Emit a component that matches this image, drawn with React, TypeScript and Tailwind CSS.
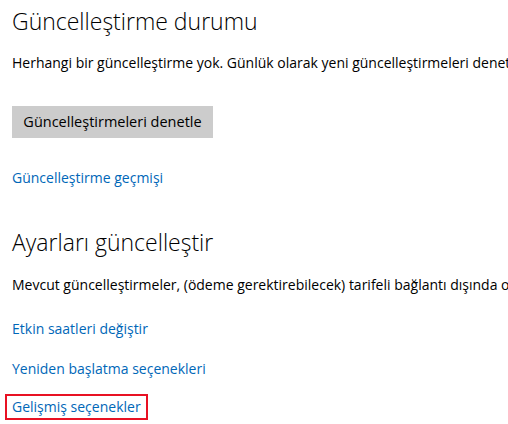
import React from "react";

export default function App() {
  const font = { fontFamily: '"Open Sans", "Noto Sans", sans-serif' };
  return (
    <div className="w-[508px] h-[424px] overflow-hidden bg-white text-black" style={font}>
      <div className="pl-[12px] flex flex-col items-start">
        <h1 className="mt-[5px] h-[32px] text-[23px] leading-[32px] font-light whitespace-nowrap">Güncelleştirme durumu</h1>
        <p className="mt-[16px] h-[20px] text-[14px] leading-[20px] whitespace-nowrap">
          Herhangi bir güncelleştirme yok. Günlük olarak yeni güncelleştirmeleri denetleyeceğiz.
        </p>
        <button className="mt-[33px] w-[201px] h-[32px] bg-[#cccccc] text-[14.5px] text-black whitespace-nowrap">
          Güncelleştirmeleri denetle
        </button>
        <a className="mt-[30px] h-[20px] text-[14px] leading-[20px] text-[#0067b8] whitespace-nowrap">Güncelleştirme geçmişi</a>
        <h1 className="mt-[38px] h-[32px] text-[23px] leading-[32px] font-light whitespace-nowrap">Ayarları güncelleştir</h1>
        <p className="mt-[17px] h-[20px] text-[14px] leading-[20px] whitespace-nowrap">
          Mevcut güncelleştirmeler, (ödeme gerektirebilecek) tarifeli bağlantı dışında otomatik olarak indirilir ve yüklenir.
        </p>
        <a className="mt-[24px] h-[20px] text-[14px] leading-[20px] text-[#0067b8] whitespace-nowrap">Etkin saatleri değiştir</a>
        <a className="mt-[20px] h-[20px] text-[14px] leading-[20px] text-[#0067b8] whitespace-nowrap">Yeniden başlatma seçenekleri</a>
        <div className="mt-[15px] -ml-[7px] border-2 border-[#e81123] w-[143px] h-[26px] pl-[5px] flex items-center">
          <a className="text-[14px] leading-[20px] text-[#0067b8] whitespace-nowrap">Gelişmiş seçenekler</a>
        </div>
      </div>
    </div>
  );
}
